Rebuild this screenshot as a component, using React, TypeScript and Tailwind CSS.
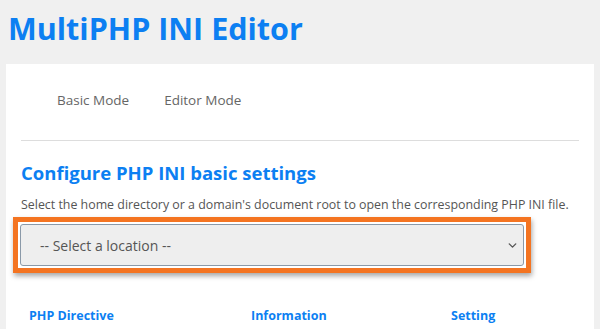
import { ChevronDown } from "lucide-react";

export default function App() {
  return (
    <div className="h-[329px] w-[600px] overflow-hidden bg-[#f0f0f0] font-['Open_Sans',sans-serif]">
      <h1 className="pl-[8px] pt-[6px] text-[30.5px] font-bold leading-[44px] text-[#0c7ff2]">
        MultiPHP INI Editor
      </h1>

      <div className="mx-[6px] mt-[14px] h-[300px] bg-white px-[15px]">
        {/* Tabs */}
        <div className="flex gap-[35px] pl-[36px] pt-[26px] text-[13.5px] text-[#666]">
          <span>Basic Mode</span>
          <span>Editor Mode</span>
        </div>
        <div className="mt-[30px] border-t border-[#ddd]" />

        <h2 className="mt-[19px] text-[18.5px] font-bold leading-[26px] text-[#0c7ff2]">
          Configure PHP INI basic settings
        </h2>
        <p className="mt-[10px] text-[12.4px] leading-[18px] text-[#555]">
          Select the home directory or a domain's document root to open the corresponding PHP INI file.
        </p>

        {/* Location select, highlighted */}
        <div className="-ml-[8px] mt-[3px] w-[518px] border-[5px] border-[#f47421] p-[2px] shadow-[1px_3px_5px_rgba(0,0,0,0.35)]">
          <div className="flex h-[42px] items-center justify-between rounded-[3px] border border-[#8a99a8] bg-[#eee] pl-[19px] pr-[4px] text-[14px] text-[#555]">
            <span>-- Select a location --</span>
            <ChevronDown className="h-[13px] w-[13px] text-[#555]" strokeWidth={2.5} />
          </div>
        </div>

        {/* Table header */}
        <div className="mt-[34px] flex text-[12.5px] font-bold text-[#0c7ff2]">
          <span className="w-[230px] pl-[8px]">PHP Directive</span>
          <span className="w-[200px]">Information</span>
          <span>Setting</span>
        </div>
      </div>
    </div>
  );
}
